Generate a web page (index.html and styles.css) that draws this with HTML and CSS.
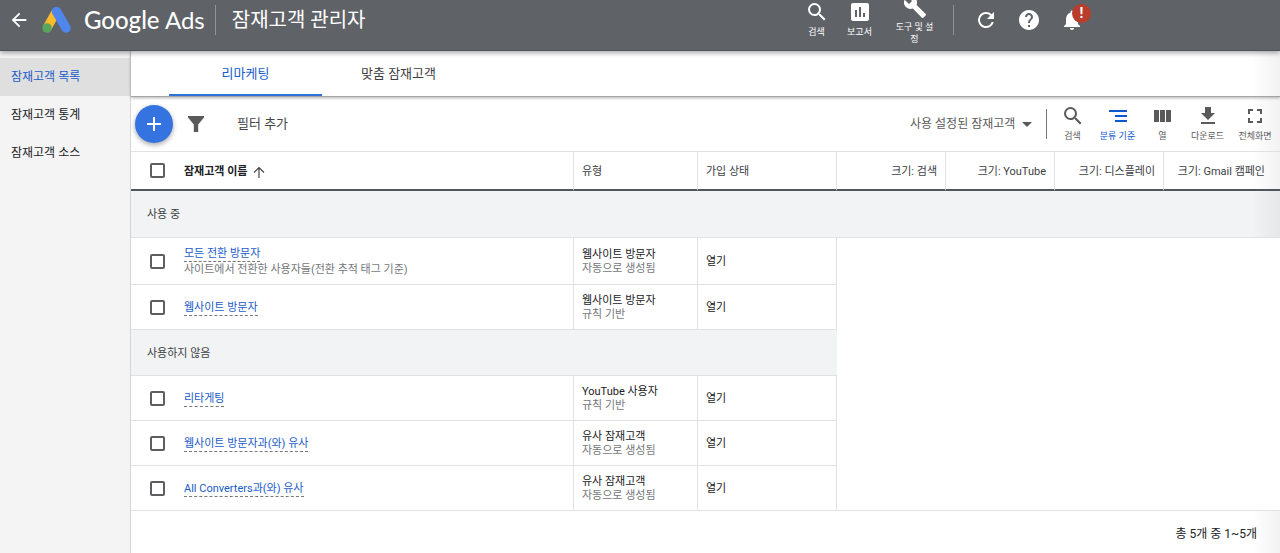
FILE: index.html
```
<!DOCTYPE html>
<html lang="ko">
<head>
  <meta charset="UTF-8">
  <meta name="viewport" content="width=device-width, initial-scale=1.0">
  <title>잠재고객 관리자 - Google Ads</title>
  <link rel="stylesheet" href="styles.css">
</head>
<body>
  <header class="topbar">
    <a href="#" class="back" aria-label="뒤로">
      <svg width="24" height="24" viewBox="0 0 24 24"><path d="M20 11H7.830l5.590-5.590L12 4l-8 8 8 8 1.410-1.410L7.830 13H20v-2z"/></svg>
    </a>
    <svg class="logo" width="30" height="28" viewBox="0 0 30 28">
      <path d="M14 6L5 22" stroke="#fbbc2c" stroke-width="9"/>
      <path d="M14.500 5.500L24 22" stroke="#4f86ec" stroke-width="9.500" stroke-linecap="round"/>
      <circle cx="5" cy="22" r="4.800" fill="#58a55c"/>
    </svg>
    <span class="brand"><b>Google</b> Ads</span>
    <span class="divider"></span>
    <h1>잠재고객 관리자</h1>
    <div class="actions">
      <button class="action">
        <svg width="24" height="20" viewBox="2 2 20 20"><path d="M15.500 14h-.79l-.28-.27A6.470 6.470 0 0 0 16 9.500 6.500 6.500 0 1 0 9.500 16c1.610 0 3.090-.59 4.230-1.570l.27.28v.79l5 4.990L20.490 19l-4.990-5zm-6 0C7.010 14 5 11.990 5 9.500S7.010 5 9.500 5 14 7.010 14 9.500 11.990 14 9.500 14z"/></svg>
        <span>검색</span>
      </button>
      <button class="action">
        <svg width="24" height="20" viewBox="2 2 20 20"><path d="M19 3H5c-1.100 0-2 .9-2 2v14c0 1.100.9 2 2 2h14c1.100 0 2-.9 2-2V5c0-1.100-.9-2-2-2zM9 17H7v-7h2v7zm4 0h-2V7h2v10zm4 0h-2v-4h2v4z"/></svg>
        <span>보고서</span>
      </button>
      <button class="action tools">
        <svg width="24" height="24" viewBox="0 0 24 24"><path d="M22.700 19l-9.100-9.100c.9-2.300.4-5-1.500-6.900-2-2-5-2.400-7.400-1.300L9 6 6 9 1.600 4.700C.4 7.100.9 10.100 2.900 12.100c1.900 1.900 4.600 2.400 6.900 1.500l9.100 9.100c.4.4 1 .4 1.400 0l2.300-2.300c.5-.4.5-1.100.1-1.400z"/></svg>
        <span>도구 및 설정</span>
      </button>
      <span class="divider"></span>
      <button class="action" aria-label="새로고침">
        <svg width="24" height="24" viewBox="0 0 24 24"><path d="M17.650 6.350A7.958 7.958 0 0 0 12 4a8 8 0 1 0 7.730 10h-2.080A5.990 5.990 0 0 1 12 18c-3.310 0-6-2.690-6-6s2.690-6 6-6c1.660 0 3.140.69 4.220 1.780L13 11h7V4l-2.350 2.350z"/></svg>
      </button>
      <button class="action" aria-label="도움말">
        <svg width="24" height="24" viewBox="0 0 24 24"><path d="M12 2C6.480 2 2 6.480 2 12s4.480 10 10 10 10-4.480 10-10S17.520 2 12 2zm1 17h-2v-2h2v2zm2.070-7.750l-.9.920C13.450 12.900 13 13.500 13 15h-2v-.5c0-1.100.45-2.100 1.170-2.830l1.240-1.260c.37-.36.59-.86.59-1.410 0-1.100-.9-2-2-2s-2 .9-2 2H8c0-2.210 1.790-4 4-4s4 1.790 4 4c0 .88-.36 1.680-.93 2.250z"/></svg>
      </button>
      <button class="action bell" aria-label="알림">
        <svg width="24" height="24" viewBox="0 0 24 24"><path d="M12 22c1.100 0 2-.9 2-2h-4c0 1.100.89 2 2 2zm6-6v-5c0-3.070-1.640-5.640-4.500-6.320V4c0-.83-.67-1.500-1.500-1.500s-1.500.67-1.500 1.500v.68C7.630 5.360 6 7.920 6 11v5l-2 2v1h16v-1l-2-2z"/></svg>
        <span class="badge">!</span>
      </button>
    </div>
  </header>

  <div class="layout">
    <nav class="sidebar">
      <a href="#" class="current">잠재고객 목록</a>
      <a href="#">잠재고객 통계</a>
      <a href="#">잠재고객 소스</a>
    </nav>

    <main>
      <div class="tabs">
        <a href="#" class="tab current">리마케팅</a>
        <a href="#" class="tab">맞춤 잠재고객</a>
      </div>

      <div class="toolbar">
        <button class="add" aria-label="추가">
          <svg width="20" height="20" viewBox="0 0 20 20"><path d="M10 3v14M3 10h14" stroke="#fff" stroke-width="2"/></svg>
        </button>
        <svg class="funnel" width="16" height="16" viewBox="0 0 16 16"><path d="M0 0h16v1.500L10.200 8.500V16H5.800V8.500L0 1.500z"/></svg>
        <button class="filter">필터 추가</button>
        <label class="view">
          <select aria-label="표시할 잠재고객">
            <option>사용 설정된 잠재고객</option>
          </select>
          <svg width="10" height="5" viewBox="0 0 10 5"><path d="M0 0h10L5 5z"/></svg>
        </label>
        <span class="divider"></span>
        <button class="tool">
          <svg width="24" height="20" viewBox="2 2 20 20"><path d="M15.500 14h-.79l-.28-.27A6.470 6.470 0 0 0 16 9.500 6.500 6.500 0 1 0 9.500 16c1.610 0 3.090-.59 4.230-1.570l.27.28v.79l5 4.990L20.490 19l-4.990-5zm-6 0C7.010 14 5 11.990 5 9.500S7.010 5 9.500 5 14 7.010 14 9.500 11.990 14 9.500 14z"/></svg>
          <span>검색</span>
        </button>
        <button class="tool active">
          <svg width="18" height="20" viewBox="0 0 18 20"><path d="M0 4h18v2H0zM6 9h12v2H6zM6 14h12v2H6z"/></svg>
          <span>분류 기준</span>
        </button>
        <button class="tool">
          <svg width="18" height="20" viewBox="0 0 18 20"><path d="M0 4h5v12H0zM6 4h5v12H6zM12 4h5v12h-5z"/></svg>
          <span>열</span>
        </button>
        <button class="tool">
          <svg width="20" height="20" viewBox="2 2 20 20"><path d="M19 9h-4V3H9v6H5l7 7 7-7zM5 18v2h14v-2H5z"/></svg>
          <span>다운로드</span>
        </button>
        <button class="tool wide">
          <svg width="20" height="20" viewBox="2 2 20 20"><path d="M5 5h5v2H7v3H5zM14 5h5v5h-2V7h-3zM17 14h2v5h-5v-2h3zM5 14h2v3h3v2H5z"/></svg>
          <span>전체화면</span>
        </button>
      </div>

      <table class="audiences">
        <colgroup>
          <col class="col-check">
          <col>
          <col class="col-type">
          <col class="col-status">
          <col class="col-size">
          <col class="col-size">
          <col class="col-size">
          <col class="col-gmail">
        </colgroup>
        <thead>
          <tr>
            <th class="check"><input type="checkbox" aria-label="모두 선택"></th>
            <th class="name">잠재고객 이름
              <svg width="12" height="12" viewBox="0 0 12 12"><path d="M6 12V1.500M1 6.500l5-5 5 5" fill="none" stroke="#444" stroke-width="1.200"/></svg>
            </th>
            <th>유형</th>
            <th>가입 상태</th>
            <th class="size">크기: 검색</th>
            <th class="size">크기: YouTube</th>
            <th class="size">크기: 디스플레이</th>
            <th class="size last">크기: Gmail 캠페인</th>
          </tr>
        </thead>
        <tbody>
          <tr class="group full">
            <td colspan="8">사용 중</td>
          </tr>
          <tr class="described">
            <td class="check"><input type="checkbox" aria-label="모든 전환 방문자"></td>
            <td class="name"><a href="#">모든 전환 방문자</a><small>사이트에서 전환한 사용자들(전환 추적 태그 기준)</small></td>
            <td>웹사이트 방문자<small>자동으로 생성됨</small></td>
            <td>열기</td>
            <td class="blank" colspan="4"></td>
          </tr>
          <tr>
            <td class="check"><input type="checkbox" aria-label="웹사이트 방문자"></td>
            <td class="name"><a href="#">웹사이트 방문자</a></td>
            <td>웹사이트 방문자<small>규칙 기반</small></td>
            <td>열기</td>
            <td class="blank" colspan="4"></td>
          </tr>
          <tr class="group">
            <td colspan="4">사용하지 않음</td>
            <td class="blank" colspan="4"></td>
          </tr>
          <tr>
            <td class="check"><input type="checkbox" aria-label="리타게팅"></td>
            <td class="name"><a href="#">리타게팅</a></td>
            <td>YouTube 사용자<small>규칙 기반</small></td>
            <td>열기</td>
            <td class="blank" colspan="4"></td>
          </tr>
          <tr>
            <td class="check"><input type="checkbox" aria-label="웹사이트 방문자과(와) 유사"></td>
            <td class="name"><a href="#">웹사이트 방문자과(와) 유사</a></td>
            <td>유사 잠재고객<small>자동으로 생성됨</small></td>
            <td>열기</td>
            <td class="blank" colspan="4"></td>
          </tr>
          <tr class="end">
            <td class="check"><input type="checkbox" aria-label="All Converters과(와) 유사"></td>
            <td class="name"><a href="#">All Converters과(와) 유사</a></td>
            <td>유사 잠재고객<small>자동으로 생성됨</small></td>
            <td>열기</td>
            <td class="blank" colspan="4"></td>
          </tr>
        </tbody>
      </table>

      <div class="pager">총 5개 중 1~5개</div>
    </main>
  </div>
</body>
</html>
```
FILE: styles.css
```
:root {
  --edge: linear-gradient(to left, rgba(0, 0, 0, 0.05), transparent 28px);
  --line: #e0e1e3;
  --blue: #1a5cc8;
}

* {
  box-sizing: border-box;
}

body {
  margin: 0;
  min-height: 100vh;
  display: flex;
  flex-direction: column;
  background: #fff;
  color: #202124;
  font-family: Roboto, "Noto Sans CJK KR", sans-serif;
  font-size: 11px;
  line-height: 14px;
}

button,
select {
  font: inherit;
  color: inherit;
  border: 0;
  padding: 0;
  background: none;
  cursor: pointer;
}

a {
  color: inherit;
  text-decoration: none;
}

svg {
  display: block;
  flex: none;
  fill: currentColor;
}

/* Top bar */
.topbar {
  display: flex;
  align-items: center;
  height: 51px;
  padding: 0 187px 11px 8px;
  background: #5f6368;
  color: #fff;
  border-bottom: 1px solid #505357;
  box-shadow: 0 2px 5px rgba(0, 0, 0, 0.35);
  position: relative;
  z-index: 2;
}

.logo {
  margin: 0 12px;
  fill: none;
}

.back svg {
  width: 22px;
}

.brand {
  font-family: Lato, sans-serif;
  font-size: 24px;
  line-height: 30px;
}

.brand b {
  font-weight: 500;
}

.divider {
  width: 1px;
  height: 30px;
  background: #909397;
}

.brand + .divider {
  margin: 0 16px 0 10px;
}

h1 {
  margin: 0;
  font-size: 20px;
  line-height: 30px;
  font-weight: 400;
}

.actions {
  display: flex;
  align-items: center;
  height: 40px;
  margin-left: auto;
}

.action {
  display: flex;
  flex-direction: column;
  align-items: center;
  gap: 4px;
  width: 43px;
  font-size: 9px;
  line-height: 12px;
  position: relative;
}

.tools {
  width: 67px;
  padding: 0 12px;
  gap: 2px;
}

.actions .divider {
  margin: 0 10px 0 5px;
}

.badge {
  position: absolute;
  top: -4px;
  right: 2px;
  width: 19px;
  height: 19px;
  border-radius: 50%;
  background: #b93d2d;
  font-size: 14px;
  font-weight: 700;
  line-height: 19px;
}

/* Page */
.layout {
  display: flex;
  flex: 1;
}

.sidebar {
  width: 131px;
  flex: none;
  padding-top: 7px;
  background: #f4f4f4;
  border-right: 1px solid #d5d5d5;
  font-size: 12px;
}

.sidebar a {
  display: block;
  padding: 0 11px;
  line-height: 38px;
}

.sidebar .current {
  background: #dfdfdf;
  color: var(--blue);
}

main {
  flex: 1;
  min-width: 0;
}

.tabs {
  display: flex;
  height: 46px;
  padding-left: 38px;
  background: var(--edge);
  border-bottom: 1px solid #a5a5a5;
  box-shadow: 0 1px 3px rgba(0, 0, 0, 0.3);
}

.tab {
  width: 153px;
  text-align: center;
  font-size: 13px;
  line-height: 45px;
  color: #3c4043;
}

.tab.current {
  color: var(--blue);
  border-bottom: 2px solid #3071dc;
}

.toolbar {
  display: flex;
  align-items: center;
  height: 54px;
  padding-left: 4px;
  background: var(--edge);
  color: #5a5a5a;
}

.add {
  display: grid;
  place-items: center;
  width: 38px;
  height: 38px;
  border-radius: 50%;
  background: #3574e0;
  box-shadow: 0 2px 5px rgba(0, 0, 0, 0.35);
}

.funnel {
  margin: 0 33px 0 15px;
}

.filter {
  font-size: 13px;
  color: #444;
}

.view {
  display: flex;
  align-items: center;
  gap: 6px;
  margin-left: auto;
  font-size: 12px;
}

.view select {
  appearance: none;
}

.toolbar .divider {
  margin: 0 3px 0 14px;
  background: #777;
}

.tool {
  display: flex;
  flex-direction: column;
  align-items: center;
  gap: 4px;
  width: 45px;
  font-size: 9px;
  line-height: 12px;
  white-space: nowrap;
}

.tool.wide {
  width: 50px;
}

.tool.active {
  color: #0b57d0;
}

/* Audience table */
.audiences {
  width: 100%;
  table-layout: fixed;
  border-collapse: separate;
  border-spacing: 0;
}

.col-check { width: 53px; }
.col-type { width: 124px; }
.col-status { width: 139px; }
.col-size { width: 109px; }
.col-gmail { width: 116px; }

th,
td {
  padding: 2px 8px 0;
  text-align: left;
  vertical-align: middle;
  border-right: 1px solid var(--line);
  border-bottom: 1px solid var(--line);
}

th {
  height: 40px;
  font-weight: 400;
  color: #3c4043;
  border-top: 1px solid var(--line);
  border-bottom: 2px solid #51555c;
}

td {
  height: 45px;
}

.described td {
  height: 47px;
}

th.name,
td.name {
  padding-left: 0;
}

th.name {
  font-weight: 700;
  color: #202124;
}

th.name svg {
  display: inline-block;
  vertical-align: -3px;
  margin-left: 3px;
}

th.size {
  text-align: right;
}

th.last {
  padding-right: 15px;
  border-right: 0;
  background: var(--edge);
}

.check {
  padding: 0 0 0 19px;
  border-right: 0;
}

input[type="checkbox"] {
  appearance: none;
  display: block;
  width: 15px;
  height: 15px;
  margin: 0;
  border: 2px solid #5c5e61;
  border-radius: 2px;
}

.name a {
  display: inline-block;
  color: var(--blue);
  border-bottom: 1px dashed #777;
}

small {
  display: block;
  font-size: 11px;
  color: #74777b;
}

.name small {
  margin-top: 1px;
}

.group td {
  height: 46px;
  padding-left: 16px;
  background-color: #f1f3f4;
  border-right: 0;
  color: #3c4043;
}

.group.full td {
  height: 47px;
  background-image: var(--edge);
}

td.blank,
.group td.blank {
  background: none;
  border: 0;
}

.end td.blank {
  border-bottom: 1px solid var(--line);
}

.pager {
  padding: 16px 23px 12px;
  background: var(--edge);
  text-align: right;
  font-size: 12px;
}
```
